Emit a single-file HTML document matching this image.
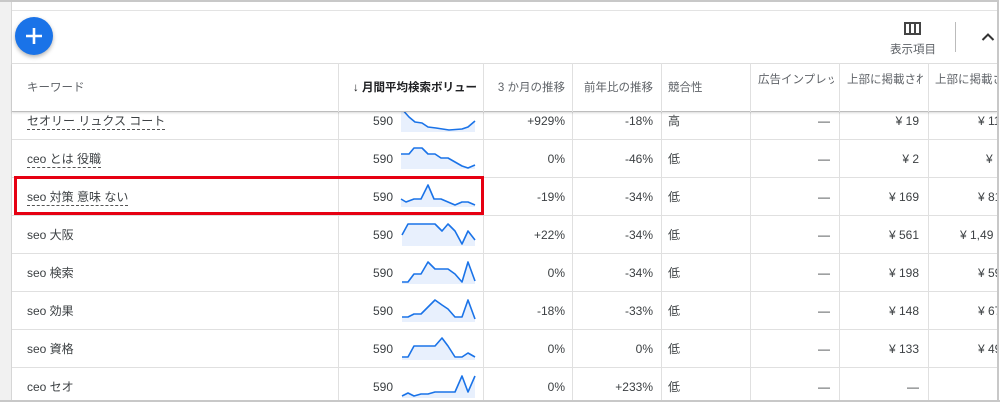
<!DOCTYPE html>
<html><head><meta charset="utf-8">
<style>
*{margin:0;padding:0;box-sizing:border-box}
body{width:1000px;height:402px;overflow:hidden;background:#fff;position:relative;font-family:"Liberation Sans","Noto Sans CJK JP",sans-serif;color:#3c4043;font-size:12px;line-height:16px}
.a{position:absolute;white-space:nowrap;line-height:16px}
.vl{position:absolute;width:1px;background:#e0e0e0}
.hl{position:absolute;height:1px;background:#e0e0e0;left:12px;width:985px}
.r{text-align:right}
.u{border-bottom:1px dashed #555;padding-bottom:1px}
.h{font-size:11.5px;color:#5f6368}
</style></head><body>
<div class="a" style="left:0;top:0;width:12px;height:402px;background:#f1f1f1;border-right:1px solid #d6d6d6"></div>
<div class="a" style="left:0;top:0;width:1000px;height:2px;background:#c8c8c8"></div>
<div class="a" style="left:12px;top:10px;width:986px;height:1px;background:#e3e3e3"></div>

<div class="a" style="left:15px;top:17px;width:38px;height:38px;border-radius:50%;background:#1a73e8;box-shadow:0 2px 4px rgba(0,0,0,.3)"></div>
<svg class="a" style="left:15px;top:17px" width="38" height="38"><path d="M19 11v16M11 19h16" stroke="#fff" stroke-width="2.6"/></svg>
<svg class="a" style="left:904px;top:22px" width="17" height="13"><rect x="1" y="1" width="15" height="11" fill="none" stroke="#444" stroke-width="2"/><path d="M6 1v11M11 1v11" stroke="#444" stroke-width="2"/></svg>
<div class="a" style="left:890px;top:42px;font-size:11.5px;color:#5f6368">表示項目</div>
<div class="a" style="left:955px;top:22px;width:1px;height:30px;background:#bbb"></div>
<svg class="a" style="left:981px;top:32px" width="14" height="9"><path d="M1.5 8L7 2.5L12.5 8" fill="none" stroke="#333" stroke-width="2"/></svg>

<div class="hl" style="top:63px"></div>
<div class="hl" style="top:139px"></div>
<div class="hl" style="top:177px"></div>
<div class="hl" style="top:215px"></div>
<div class="hl" style="top:253px"></div>
<div class="hl" style="top:291px"></div>
<div class="hl" style="top:329px"></div>
<div class="hl" style="top:367px"></div>
<div class="vl" style="left:338px;top:63px;height:339px"></div>
<div class="vl" style="left:483px;top:63px;height:339px"></div>
<div class="vl" style="left:572px;top:63px;height:339px"></div>
<div class="vl" style="left:661px;top:63px;height:339px"></div>
<div class="vl" style="left:750px;top:63px;height:339px"></div>
<div class="vl" style="left:839px;top:63px;height:339px"></div>
<div class="vl" style="left:928px;top:63px;height:339px"></div>

<svg class="a" style="left:0;top:0" width="1000" height="402">
<g fill="#e8f0fd" stroke="none">
<polygon points="401,108 409,117 415,122 422,123 428,127 436,128 449,130 462,129 468,127 475,121 475,132 401,132"/>
<polygon points="401,154 409,154 414,148 422,148 428,154 435,154 441,158 448,158 455,162 462,166 468,168 475,165 475,169 401,169"/>
<polygon points="401,199 406,202 414,199 421,199 428,185 434,199 441,199 448,202 455,205 462,202 468,202 475,205 475,207 401,207"/>
<polygon points="402,235 408,224 435,224 442,231 448,224 455,231 462,244 468,231 475,240 475,246 402,246"/>
<polygon points="402,282 408,282 414,274 421,274 428,262 435,269 448,269 455,274 462,282 468,262 475,281 475,284 402,284"/>
<polygon points="402,317 408,317 414,314 421,314 428,307 435,300 442,305 448,309 455,317 462,317 468,300 475,319 475,322 402,322"/>
<polygon points="402,357 408,357 414,346 435,346 442,338 448,346 455,357 462,357 468,353 475,357 475,360 402,360"/>
<polygon points="402,396 408,393 414,396 421,394 428,394 435,392 455,392 462,376 468,392 475,376 475,398 402,398"/>
</g>
<g fill="none" stroke="#1a73e8" stroke-width="1.6" stroke-linejoin="round">
<polyline points="401,108 409,117 415,122 422,123 428,127 436,128 449,130 462,129 468,127 475,121"/>
<polyline points="401,154 409,154 414,148 422,148 428,154 435,154 441,158 448,158 455,162 462,166 468,168 475,165"/>
<polyline points="401,199 406,202 414,199 421,199 428,185 434,199 441,199 448,202 455,205 462,202 468,202 475,205"/>
<polyline points="402,235 408,224 435,224 442,231 448,224 455,231 462,244 468,231 475,240"/>
<polyline points="402,282 408,282 414,274 421,274 428,262 435,269 448,269 455,274 462,282 468,262 475,281"/>
<polyline points="402,317 408,317 414,314 421,314 428,307 435,300 442,305 448,309 455,317 462,317 468,300 475,319"/>
<polyline points="402,357 408,357 414,346 435,346 442,338 448,346 455,357 462,357 468,353 475,357"/>
<polyline points="402,396 408,393 414,396 421,394 428,394 435,392 455,392 462,376 468,392 475,376"/>
</g>
</svg>

<div class="a" style="left:12px;top:64px;width:985px;height:48px;background:#fff;border-bottom:1px solid #bdbdbd;box-shadow:0 1px 2px rgba(0,0,0,.15)"></div>
<div class="vl" style="left:338px;top:63px;height:49px"></div>
<div class="vl" style="left:483px;top:63px;height:49px"></div>
<div class="vl" style="left:572px;top:63px;height:49px"></div>
<div class="vl" style="left:661px;top:63px;height:49px"></div>
<div class="vl" style="left:750px;top:63px;height:49px"></div>
<div class="vl" style="left:839px;top:63px;height:49px"></div>
<div class="vl" style="left:928px;top:63px;height:49px"></div>
<div class="a h" style="left:27px;top:80px">キーワード</div>
<div class="a" style="left:353px;top:80px;width:124px;overflow:hidden;font-weight:bold;color:#202124;font-size:11.5px">↓ 月間平均検索ボリュー</div>
<div class="a r h" style="right:435px;top:80px">3 か月の推移</div>
<div class="a r h" style="right:347px;top:80px">前年比の推移</div>
<div class="a h" style="left:668px;top:80px">競合性</div>
<div class="a h" style="left:758px;top:72px;width:76px;overflow:hidden">広告インプレッ</div>
<div class="a h" style="left:847px;top:72px;width:76px;overflow:hidden">上部に掲載され</div>
<div class="a h" style="left:935px;top:72px;width:62px;overflow:hidden">上部に掲載さ</div>

<div class="a" style="left:27px;top:113px"><span class="u">セオリー リュクス コート</span></div>
<div class="a" style="left:27px;top:151px"><span class="u">ceo とは 役職</span></div>
<div class="a" style="left:27px;top:189px"><span class="u">seo 対策 意味 ない</span></div>
<div class="a" style="left:27px;top:227px">seo 大阪</div>
<div class="a" style="left:27px;top:265px">seo 検索</div>
<div class="a" style="left:27px;top:303px">seo 効果</div>
<div class="a" style="left:27px;top:341px">seo 資格</div>
<div class="a" style="left:27px;top:379px">ceo セオ</div>

<div class="a r" style="right:607px;top:113px">590</div>
<div class="a r" style="right:607px;top:151px">590</div>
<div class="a r" style="right:607px;top:189px">590</div>
<div class="a r" style="right:607px;top:227px">590</div>
<div class="a r" style="right:607px;top:265px">590</div>
<div class="a r" style="right:607px;top:303px">590</div>
<div class="a r" style="right:607px;top:341px">590</div>
<div class="a r" style="right:607px;top:379px">590</div>

<div class="a r" style="right:435px;top:113px">+929%</div>
<div class="a r" style="right:435px;top:151px">0%</div>
<div class="a r" style="right:435px;top:189px">-19%</div>
<div class="a r" style="right:435px;top:227px">+22%</div>
<div class="a r" style="right:435px;top:265px">0%</div>
<div class="a r" style="right:435px;top:303px">-18%</div>
<div class="a r" style="right:435px;top:341px">0%</div>
<div class="a r" style="right:435px;top:379px">0%</div>

<div class="a r" style="right:347px;top:113px">-18%</div>
<div class="a r" style="right:347px;top:151px">-46%</div>
<div class="a r" style="right:347px;top:189px">-34%</div>
<div class="a r" style="right:347px;top:227px">-34%</div>
<div class="a r" style="right:347px;top:265px">-34%</div>
<div class="a r" style="right:347px;top:303px">-33%</div>
<div class="a r" style="right:347px;top:341px">0%</div>
<div class="a r" style="right:347px;top:379px">+233%</div>

<div class="a" style="left:668px;top:113px">高</div>
<div class="a" style="left:668px;top:151px">低</div>
<div class="a" style="left:668px;top:189px">低</div>
<div class="a" style="left:668px;top:227px">低</div>
<div class="a" style="left:668px;top:265px">低</div>
<div class="a" style="left:668px;top:303px">低</div>
<div class="a" style="left:668px;top:341px">低</div>
<div class="a" style="left:668px;top:379px">低</div>

<div class="a r" style="right:170px;top:113px">—</div>
<div class="a r" style="right:170px;top:151px">—</div>
<div class="a r" style="right:170px;top:189px">—</div>
<div class="a r" style="right:170px;top:227px">—</div>
<div class="a r" style="right:170px;top:265px">—</div>
<div class="a r" style="right:170px;top:303px">—</div>
<div class="a r" style="right:170px;top:341px">—</div>
<div class="a r" style="right:170px;top:379px">—</div>

<div class="a r" style="right:81px;top:113px">¥ 19</div>
<div class="a r" style="right:81px;top:151px">¥ 2</div>
<div class="a r" style="right:81px;top:189px">¥ 169</div>
<div class="a r" style="right:81px;top:227px">¥ 561</div>
<div class="a r" style="right:81px;top:265px">¥ 198</div>
<div class="a r" style="right:81px;top:303px">¥ 148</div>
<div class="a r" style="right:81px;top:341px">¥ 133</div>
<div class="a r" style="right:81px;top:379px">—</div>

<div class="a" style="left:978px;top:113px">¥ 11</div>
<div class="a" style="left:986px;top:151px">¥</div>
<div class="a" style="left:978px;top:189px">¥ 81</div>
<div class="a" style="left:960px;top:227px">¥ 1,49</div>
<div class="a" style="left:978px;top:265px">¥ 59</div>
<div class="a" style="left:978px;top:303px">¥ 67</div>
<div class="a" style="left:978px;top:341px">¥ 49</div>
<div class="a" style="left:997px;top:0;width:3px;height:402px;background:#fff"></div>
<div class="a" style="left:997px;top:0;width:2px;height:402px;background:#c8c8c8"></div>
<div class="a" style="left:0;top:400px;width:1000px;height:2px;background:#c8c8c8"></div>

<div class="a" style="left:14px;top:176px;width:470px;height:39px;border:3px solid #e60012"></div>
</body></html>
